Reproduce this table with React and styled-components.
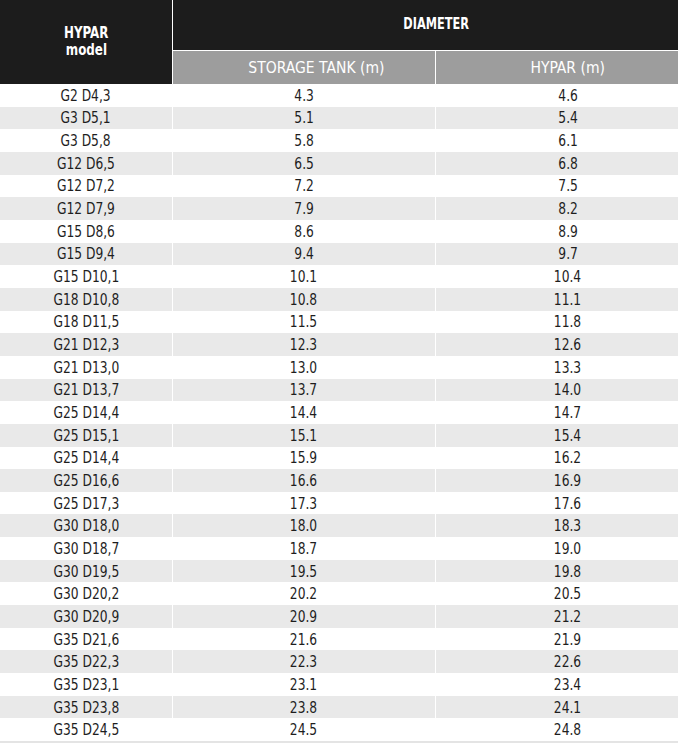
import React from 'react'
import styled, { createGlobalStyle } from 'styled-components'

const Global = createGlobalStyle`
  body {
    margin:0;
    background:#fff;
    overflow:hidden;
    font-family:"Liberation Sans Narrow", "DejaVu Sans Condensed", "Liberation Sans", sans-serif;
    font-stretch:condensed;
  }
`

const Table = styled.div`
  width:700px;
  display:grid;
  grid-template-columns:172px 262px 264px;
  column-gap:1px;
  border-bottom:2px solid #e4e4e4;
`

// the source face is a narrow DIN-like one; squeeze the condensed fallback to its width
const Narrow = styled.span`
  display:${p => (p.$block ? 'block' : 'inline-block')};
  transform:scaleX(${p => p.$x || 0.88});
  white-space:nowrap;
`

const ModelHead = styled.div`
  grid-row:1 / span 2;
  height:84px;
  background:#1c1c1c;
  color:#fff;
  font-weight:bold;
  font-size:15px;
  line-height:17px;
  display:flex;
  flex-direction:column;
  align-items:center;
  justify-content:center;
  text-align:center;
`

const GroupHead = styled.div`
  grid-column:2 / span 2;
  height:51px;
  background:#1c1c1c;
  color:#fff;
  font-weight:bold;
  font-size:15px;
  display:flex;
  align-items:center;
  justify-content:center;
  padding-bottom:3px;
  box-sizing:border-box;
  border-bottom:1px solid #fff;
`

const SubHead = styled.div`
  height:33px;
  background:#9d9d9d;
  color:#fff;
  font-size:16.5px;
  display:flex;
  align-items:center;
  justify-content:center;
  padding-left:${p => p.$shift || 0}px;
  box-sizing:border-box;
`

const Cell = styled.div`
  height:22.66px;
  background:${p => (p.$odd ? '#e9e9e9' : '#fff')};
  color:#1e1e1e;
  font-size:15.5px;
  display:flex;
  align-items:center;
  justify-content:center;
  padding-top:1px;
  box-sizing:border-box;
`

const rows = [
  ['G2 D4,3', '4.3', '4.6'],
  ['G3 D5,1', '5.1', '5.4'],
  ['G3 D5,8', '5.8', '6.1'],
  ['G12 D6,5', '6.5', '6.8'],
  ['G12 D7,2', '7.2', '7.5'],
  ['G12 D7,9', '7.9', '8.2'],
  ['G15 D8,6', '8.6', '8.9'],
  ['G15 D9,4', '9.4', '9.7'],
  ['G15 D10,1', '10.1', '10.4'],
  ['G18 D10,8', '10.8', '11.1'],
  ['G18 D11,5', '11.5', '11.8'],
  ['G21 D12,3', '12.3', '12.6'],
  ['G21 D13,0', '13.0', '13.3'],
  ['G21 D13,7', '13.7', '14.0'],
  ['G25 D14,4', '14.4', '14.7'],
  ['G25 D15,1', '15.1', '15.4'],
  ['G25 D14,4', '15.9', '16.2'],
  ['G25 D16,6', '16.6', '16.9'],
  ['G25 D17,3', '17.3', '17.6'],
  ['G30 D18,0', '18.0', '18.3'],
  ['G30 D18,7', '18.7', '19.0'],
  ['G30 D19,5', '19.5', '19.8'],
  ['G30 D20,2', '20.2', '20.5'],
  ['G30 D20,9', '20.9', '21.2'],
  ['G35 D21,6', '21.6', '21.9'],
  ['G35 D22,3', '22.3', '22.6'],
  ['G35 D23,1', '23.1', '23.4'],
  ['G35 D23,8', '23.8', '24.1'],
  ['G35 D24,5', '24.5', '24.8'],
]

const App = () => {
  return (
    <>
      <Global />
      <Table>
        <ModelHead>
          <Narrow $block $x={0.88}>HYPAR</Narrow>
          <Narrow $block $x={0.88}>model</Narrow>
        </ModelHead>
        <GroupHead><Narrow $x={0.84}>DIAMETER</Narrow></GroupHead>
        <SubHead $shift={24}><Narrow $x={0.94}>STORAGE TANK (m)</Narrow></SubHead>
        <SubHead><Narrow $x={0.94}>HYPAR (m)</Narrow></SubHead>
        {rows.map((r, i) =>
          r.map((v, j) => (
            <Cell key={i + '-' + j} $odd={i % 2 === 1}><Narrow>{v}</Narrow></Cell>
          ))
        )}
      </Table>
    </>
  )
}

export default App
